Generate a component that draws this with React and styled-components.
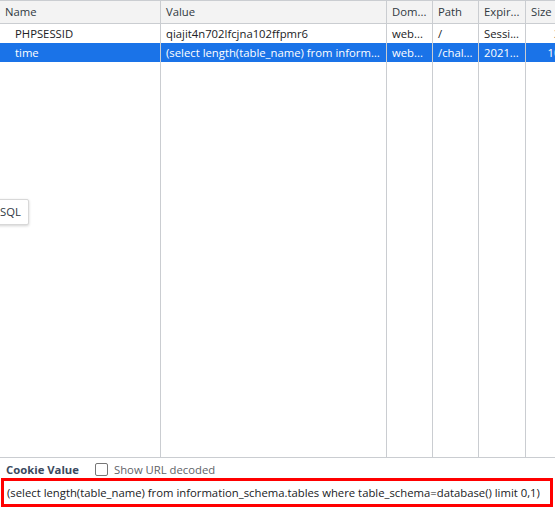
import React from 'react'
import styled, { createGlobalStyle } from 'styled-components'

const Global = createGlobalStyle`
  html, body { margin: 0; padding: 0; background: #fff; }
  body { font-family: "Open Sans", "Noto Sans", sans-serif; font-size: 11.3px; color: #202124; }
`

const Page = styled.div`
  position: relative;
  width: 555px;
  height: 510px;
  overflow: hidden;
  display: flex;
  flex-direction: column;
  border-top: 1px solid #cacdd1;
  box-sizing: border-box;
`

const Grid = styled.div`
  display: flex;
  height: 456px;
  border-bottom: 1px solid #cacdd1;
  flex-shrink: 0;
`

const Column = styled.div`
  width: ${p => p.w}px;
  flex-shrink: 0;
  border-right: 1px solid #cacdd1;
  display: flex;
  flex-direction: column;
`

const Head = styled.div`
  height: 22px;
  line-height: 22px;
  background: #f3f3f3;
  border-bottom: 1px solid #cacdd1;
  padding: 0 5px;
  color: #303942;
  white-space: nowrap;
  overflow: hidden;
`

const Cell = styled.div`
  height: 19px;
  line-height: 19px;
  padding: 0 ${p => (p.right ? 4 : 5)}px 0 ${p => (p.indent ? 15 : 5)}px;
  white-space: nowrap;
  overflow: hidden;
  text-overflow: ellipsis;
  text-align: ${p => (p.right ? 'right' : 'left')};
  background: ${p => (p.sel ? '#1a73e8' : 'transparent')};
  color: ${p => (p.sel ? '#fff' : '#202124')};
`

const Tip = styled.div`
  position: absolute;
  left: -16px;
  top: 198px;
  height: 24px;
  line-height: 24px;
  padding: 0 7px 0 15px;
  background: #fff;
  border: 1px solid #d8d8d8;
  border-radius: 2px;
  box-shadow: 0 1px 3px rgba(0, 0, 0, 0.18);
  color: #303942;
`

const Footer = styled.div`
  display: flex;
  flex-direction: column;
  padding: 3px 5px 0 1px;
`

const Bar = styled.div`
  display: flex;
  align-items: center;
  height: 17px;
  padding-left: 5px;
  gap: 16px;
`

const Label = styled.span`
  font-weight: 700;
  color: #3c4a5e;
`

const Check = styled.label`
  display: flex;
  align-items: center;
  gap: 6px;
  color: #5f6368;
`

const Box = styled.span`
  width: 11px;
  height: 11px;
  border: 1px solid #767676;
  border-radius: 2px;
  background: #fff;
`

const ValueBox = styled.div`
  height: 23px;
  line-height: 23px;
  width: 543px;
  border: 3px solid #ff0000;
  padding-left: 3px;
  white-space: nowrap;
  overflow: hidden;
  color: #202124;
`

const cols = [
  { key: 'name', title: 'Name', w: 160 },
  { key: 'value', title: 'Value', w: 225 },
  { key: 'domain', title: 'Dom...', w: 45 },
  { key: 'path', title: 'Path', w: 45 },
  { key: 'exp', title: 'Expir...', w: 46 },
  { key: 'size', title: 'Size', w: 45 },
]

const rows = [
  { name: 'PHPSESSID', value: 'qiajit4n702lfcjna102ffpmr6', domain: 'web...', path: '/', exp: 'Sessi...', size: '35' },
  {
    name: 'time',
    value: '(select length(table_name) from information_schema.tables where table_schema=database() limit 0,1)',
    domain: 'web...',
    path: '/chal...',
    exp: '2021...',
    size: '106',
    sel: true,
  },
]

export default function App() {
  return (
    <>
      <Global />
      <Page>
        <Grid>
          {cols.map(c => (
            <Column key={c.key} w={c.w}>
              <Head>{c.title}</Head>
              {rows.map((r, i) => (
                <Cell key={i} sel={r.sel} indent={c.key === 'name'} right={c.key === 'size'}>
                  {r[c.key]}
                </Cell>
              ))}
            </Column>
          ))}
        </Grid>
        <Footer>
          <Bar>
            <Label>Cookie Value</Label>
            <Check>
              <Box />
              Show URL decoded
            </Check>
          </Bar>
          <ValueBox>
            (select length(table_name) from information_schema.tables where table_schema=database() limit 0,1)
          </ValueBox>
        </Footer>
        <Tip>SQL</Tip>
      </Page>
    </>
  )
}
